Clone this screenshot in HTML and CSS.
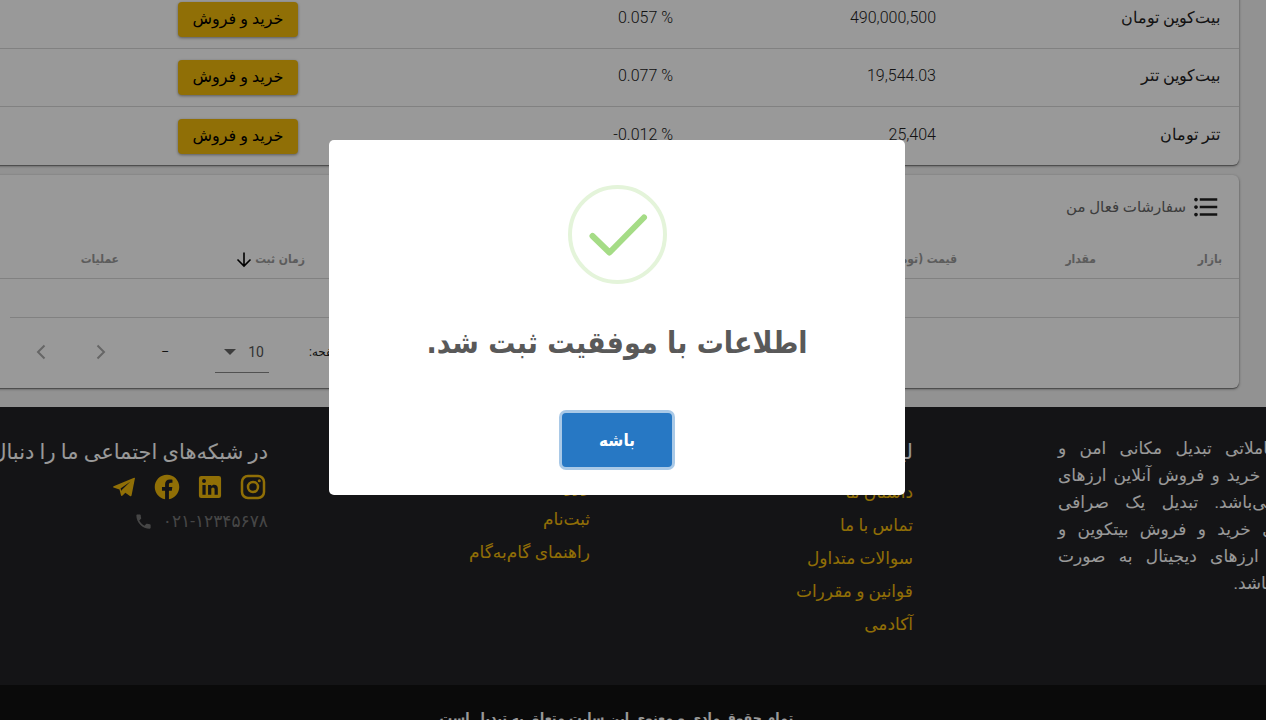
FILE: index.html
```html
<!DOCTYPE html>
<html lang="fa" dir="rtl">
<head>
    <meta charset="UTF-8">
    <meta name="viewport" content="width=device-width, initial-scale=1.0">
    <title>تبدیل</title>
    <link rel="stylesheet" href="styles.css">
</head>
<body>
    <main class="content">
        <section class="card markets">
            <table class="market-table">
                <colgroup>
                    <col class="col-name">
                    <col class="col-price">
                    <col class="col-change">
                    <col>
                </colgroup>
                <tbody>
                    <tr>
                        <td>بیت‌کوین تومان</td>
                        <td><span dir="ltr">490,000,500</span></td>
                        <td><span dir="ltr">0.057 %</span></td>
                        <td class="trade"><button type="button" class="trade-btn">خرید و فروش</button></td>
                    </tr>
                    <tr>
                        <td>بیت‌کوین تتر</td>
                        <td><span dir="ltr">19,544.03</span></td>
                        <td><span dir="ltr">0.077 %</span></td>
                        <td class="trade"><button type="button" class="trade-btn">خرید و فروش</button></td>
                    </tr>
                    <tr>
                        <td>تتر تومان</td>
                        <td><span dir="ltr">25,404</span></td>
                        <td><span dir="ltr">-0.012 %</span></td>
                        <td class="trade"><button type="button" class="trade-btn">خرید و فروش</button></td>
                    </tr>
                </tbody>
            </table>
        </section>

        <section class="card orders">
            <div class="card-title">
                <svg width="30" height="30" viewBox="0 0 24 24" fill="#212121"><path d="M4 10.5c-.83 0-1.5.67-1.5 1.5s.67 1.5 1.5 1.5 1.5-.67 1.5-1.5-.67-1.5-1.5-1.5zm0-6c-.83 0-1.5.67-1.5 1.5S3.17 7.500 4 7.500 5.500 6.830 5.500 6 4.830 4.500 4 4.500zm0 12c-.83 0-1.500.68-1.500 1.500s.68 1.500 1.500 1.500 1.500-.68 1.500-1.500-.67-1.500-1.500-1.500zM7 19h14v-2H7v2zm0-6h14v-2H7v2zm0-8v2h14V5H7z"/></svg>
                <h2>سفارشات فعال من</h2>
            </div>
            <table class="orders-table">
                <colgroup>
                    <col class="col-market">
                    <col class="col-amount">
                    <col>
                    <col class="col-time">
                    <col class="col-actions">
                </colgroup>
                <thead>
                    <tr>
                        <th>بازار</th>
                        <th>مقدار</th>
                        <th>قیمت (تومان)</th>
                        <th>
                            <span class="sorted">زمان ثبت
                                <svg width="18" height="18" viewBox="0 0 18 18" fill="none" stroke="#000" stroke-width="1.6"><path d="M9 2.500v13M2.500 9.500L9 16 15.500 9.500"/></svg>
                            </span>
                        </th>
                        <th>عملیات</th>
                    </tr>
                </thead>
            </table>
            <div class="empty-row"></div>
            <div class="pagination">
                <label for="perPage">تعداد در هر صفحه:</label>
                <div class="select-wrap">
                    <select id="perPage">
                        <option>10</option>
                        <option>25</option>
                        <option>50</option>
                    </select>
                    <svg class="caret" width="12" height="6" viewBox="0 0 12 6" fill="#666"><path d="M0 0h12L6 6z"/></svg>
                </div>
                <span class="range">–</span>
                <button type="button" class="page-btn" aria-label="قبلی" disabled>
                    <svg width="24" height="24" viewBox="0 0 24 24" fill="none" stroke="#aaa" stroke-width="2"><path d="M8.500 5.500L15 12l-6.500 6.500"/></svg>
                </button>
                <button type="button" class="page-btn" aria-label="بعدی" disabled>
                    <svg width="24" height="24" viewBox="0 0 24 24" fill="none" stroke="#aaa" stroke-width="2"><path d="M15.500 5.500L9 12l6.500 6.500"/></svg>
                </button>
            </div>
        </section>
    </main>

    <footer class="footer">
        <div class="footer-grid">
            <p class="about">
                <span>پلتفرم معاملاتی تبدیل مکانی امن و</span>
                <span>آسان برای خرید و فروش آنلاین ارزهای</span>
                <span>دیجیتال می‌باشد. تبدیل یک صرافی</span>
                <span>آنلاین برای خرید و فروش بیتکوین و</span>
                <span>دیگر رمز ارزهای دیجیتال به صورت</span>
                <span class="last">اینترنتی میباشد.</span>
            </p>
            <nav class="links">
                <h3>لینک‌های مفید</h3>
                <a href="#">داستان ما</a>
                <a href="#">تماس با ما</a>
                <a href="#">سوالات متداول</a>
                <a href="#">قوانین و مقررات</a>
                <a href="#">آکادمی</a>
            </nav>
            <nav class="links account">
                <a href="#">ورود</a>
                <a href="#">ثبت‌نام</a>
                <a href="#">راهنمای گام‌به‌گام</a>
            </nav>
            <div class="social">
                <h3>در شبکه‌های اجتماعی ما را دنبال کنید</h3>
                <div class="social-icons">
                    <a href="#" aria-label="instagram">
                        <svg width="28" height="28" viewBox="0 0 28 28" fill="none" stroke="#f0b90b" stroke-width="2.500"><rect x="3" y="3" width="22" height="22" rx="6"/><circle cx="14" cy="14" r="5"/><circle cx="20.300" cy="7.800" r="1.500" fill="#f0b90b" stroke="none"/></svg>
                    </a>
                    <a href="#" aria-label="linkedin">
                        <svg width="28" height="28" viewBox="0 0 24 24" fill="#f0b90b"><path d="M19.500 2.500a2 2 0 0 1 2 2v15a2 2 0 0 1-2 2h-15a2 2 0 0 1-2-2v-15a2 2 0 0 1 2-2h15zM18.700 18.700v-5.300a3.260 3.260 0 0 0-3.260-3.260c-.85 0-1.840.52-2.320 1.300v-1.110h-2.790v8.370h2.790v-4.930c0-.77.620-1.400 1.390-1.400a1.400 1.400 0 0 1 1.400 1.400v4.930h2.790zM6.880 8.560a1.680 1.680 0 0 0 1.680-1.680c0-.93-.75-1.690-1.680-1.690a1.690 1.690 0 0 0-1.690 1.690c0 .93.760 1.680 1.690 1.680zm1.390 10.140v-8.370H5.500v8.370h2.770z"/></svg>
                    </a>
                    <a href="#" aria-label="facebook">
                        <svg width="28" height="28" viewBox="0 0 24 24" fill="#f0b90b"><path d="M22.500 12.060C22.500 6.220 17.800 1.500 12 1.500S1.500 6.220 1.500 12.060c0 5.270 3.840 9.640 8.860 10.440v-7.390H7.690v-3.050h2.670V9.730c0-2.650 1.570-4.110 3.970-4.110 1.150 0 2.350.21 2.350.21v2.600h-1.320c-1.310 0-1.720.81-1.720 1.650v1.980h2.920l-.47 3.050h-2.450v7.390c5.020-.8 8.860-5.170 8.860-10.440z"/></svg>
                    </a>
                    <a href="#" aria-label="telegram">
                        <svg width="28" height="28" viewBox="0 0 28 28" fill="#f0b90b"><path d="M25 5L21.600 22.200Q21.300 23.800 19.900 23L15.300 19.700 12.600 22.600Q11.200 23.800 10.900 21.900L9.500 16.500 3.500 14.500Q2.400 14 3.600 13.200L23.500 5Q25 4.300 25 5zM20.500 8.600L10.500 15.600 11.500 18 12 16.700z" fill-rule="evenodd"/></svg>
                    </a>
                </div>
                <div class="phone">
                    <span>۰۲۱-۱۲۳۴۵۶۷۸</span>
                    <svg width="19" height="19" viewBox="0 0 24 24" fill="#767676"><path d="M6.620 10.790c1.440 2.830 3.760 5.140 6.590 6.590l2.200-2.200c.27-.27.670-.36 1.020-.24 1.120.37 2.330.57 3.570.57.550 0 1 .45 1 1V20c0 .55-.45 1-1 1-9.390 0-17-7.610-17-17 0-.55.450-1 1-1h3.500c.55 0 1 .45 1 1 0 1.250.200 2.450.570 3.570.110.350.030.740-.25 1.020l-2.200 2.200z"/></svg>
                </div>
            </div>
        </div>
        <div class="copyright">تمام حقوق مادی و معنوی این سایت متعلق به تبدیل است.</div>
    </footer>

    <div class="overlay">
        <div class="modal" role="dialog" aria-labelledby="modalTitle">
            <svg class="success-icon" width="99" height="99" viewBox="0 0 99 99" fill="none"><circle cx="49.500" cy="49.500" r="47.500" stroke="#e4f4da" stroke-width="4"/><path d="M24.500 51L41.500 67.500 76 32.500" stroke="#a5dc86" stroke-width="6" stroke-linecap="round" stroke-linejoin="round"/></svg>
            <h2 id="modalTitle">اطلاعات با موفقیت ثبت شد.</h2>
            <button type="button" class="confirm-btn">باشه</button>
        </div>
    </div>
</body>
</html>
```

FILE: styles.css
```css
* {
    box-sizing: border-box;
}
body {
    margin: 0;
    height: 100vh;
    overflow: hidden;
    background-color: #f3f3f3;
    color: #212121;
    font-family: Roboto, "DejaVu Sans", sans-serif;
    font-size: 16px;
}
h2, h3, p {
    margin: 0;
}
svg {
    display: block;
    flex-shrink: 0;
}
table {
    width: 100%;
    border-collapse: separate;
    border-spacing: 0;
    table-layout: fixed;
}
a {
    color: #f0b90b;
    text-decoration: none;
}
button, select {
    font-family: inherit;
}

/* cards */
.content {
    margin: -9px 27px 0 -12px;
    padding-bottom: 19px;
}
.card {
    background-color: #fff;
    border-radius: 6px;
    box-shadow: 0 1px 3px rgba(0, 0, 0, 0.4), 0 1px 1px rgba(0, 0, 0, 0.3);
}
.market-table td {
    height: 58px;
    padding: 0 19px 4px;
    border-bottom: 1px solid #d8d8d8;
    text-align: right;
    font-weight: 300;
    white-space: nowrap;
}
.market-table .trade {
    padding-bottom: 0;
}
.market-table tr:last-child td {
    border-bottom: none;
}
.col-name {
    width: 284px;
}
.col-price {
    width: 263px;
}
.col-change {
    width: 375px;
}
.trade-btn {
    display: block;
    width: 120px;
    height: 35px;
    padding: 0 0 2px;
    border: none;
    border-radius: 4px;
    background-color: #f0b90b;
    box-shadow: 0 1px 3px rgba(0, 0, 0, 0.4);
    color: #000;
    font-size: 16px;
    cursor: pointer;
}
.orders {
    margin-top: 10px;
}
.card-title {
    display: flex;
    align-items: center;
    gap: 5px;
    height: 64px;
    padding: 0 18px;
}
.card-title h2 {
    color: #666;
    font-size: 15px;
    font-weight: 400;
}
.orders-table th {
    height: 40px;
    padding: 0 17px;
    border-bottom: 1px solid #d8d8d8;
    color: #999;
    font-family: "DejaVu Sans Condensed", "DejaVu Sans", sans-serif;
    font-size: 12px;
    text-align: right;
    white-space: nowrap;
}
.col-market {
    width: 126px;
}
.col-amount {
    width: 139px;
}
.col-time {
    width: 186px;
}
.col-actions {
    width: 148px;
}
.sorted {
    display: flex;
    align-items: center;
    gap: 2px;
}
.empty-row {
    height: 39px;
    margin-left: 22px;
    border-bottom: 1px solid #d8d8d8;
}
.pagination {
    display: flex;
    align-items: center;
    justify-content: flex-end;
    height: 70px;
    padding: 0 0 2px 41px;
    font-size: 12px;
}
.select-wrap {
    display: flex;
    align-items: center;
    position: relative;
    width: 54px;
    height: 42px;
    margin-right: 40px;
    border-bottom: 1px solid #888;
}
.select-wrap select {
    width: 100%;
    height: 41px;
    padding: 0 5px;
    border: none;
    background: transparent;
    color: #555;
    font-size: 14px;
    appearance: none;
}
.caret {
    position: absolute;
    left: 9px;
}
.range {
    width: 8px;
    margin: 0 46px 0 48px;
}
.page-btn {
    padding: 0;
    border: none;
    background: none;
}
.page-btn + .page-btn {
    margin-right: 36px;
}

/* footer */
.footer {
    background-color: #222225;
    color: #fff;
    overflow: hidden;
}
.footer-grid {
    display: grid;
    grid-template-columns: 323px 323px 322px 1fr;
    height: 278px;
    padding: 28px 30px 0 0;
}
.about {
    width: 285px;
    margin-right: -107px;
    font-size: 17px;
    line-height: 27px;
}
.about span {
    display: block;
    text-align: justify;
    text-align-last: justify;
    white-space: nowrap;
}
.about .last {
    text-align-last: right;
}
.footer h3 {
    font-size: 21px;
    font-weight: 400;
    line-height: 34px;
    white-space: nowrap;
}
.links {
    display: flex;
    flex-direction: column;
    align-items: flex-start;
}
.links h3 {
    margin-bottom: 7px;
}
.links a {
    font-size: 17px;
    line-height: 33px;
}
.account {
    padding-top: 35px;
}
.social-icons {
    display: flex;
    gap: 15px;
    margin-top: 4px;
    padding-right: 1px;
}
.phone {
    display: flex;
    align-items: center;
    gap: 10px;
    margin-top: 6px;
    color: #767676;
    font-size: 17px;
    line-height: 28px;
}
.copyright {
    padding: 18px 38px 18px 0;
    background-color: #111;
    font-family: "DejaVu Sans Condensed", "DejaVu Sans", sans-serif;
    font-size: 14px;
    font-weight: 700;
    line-height: 30px;
    text-align: center;
}

/* success dialog */
.overlay {
    display: flex;
    align-items: center;
    justify-content: center;
    position: fixed;
    inset: 0;
    padding: 0 32px 85px 0;
    background-color: rgba(0, 0, 0, 0.4);
}
.modal {
    display: flex;
    flex-direction: column;
    align-items: center;
    width: 576px;
    padding: 45px 20px 28px;
    border-radius: 5px;
    background-color: #fff;
    font-family: "DejaVu Sans Condensed", "DejaVu Sans", sans-serif;
}
.modal h2 {
    margin: 34px 0 45px;
    color: #595959;
    font-size: 30px;
    line-height: 50px;
    white-space: nowrap;
}
.confirm-btn {
    width: 110px;
    height: 54px;
    border: none;
    border-radius: 4px;
    background-color: #2778c4;
    box-shadow: 0 0 0 3px rgba(39, 120, 196, 0.4);
    color: #fff;
    font-size: 17px;
    font-weight: 700;
    cursor: pointer;
}
```
